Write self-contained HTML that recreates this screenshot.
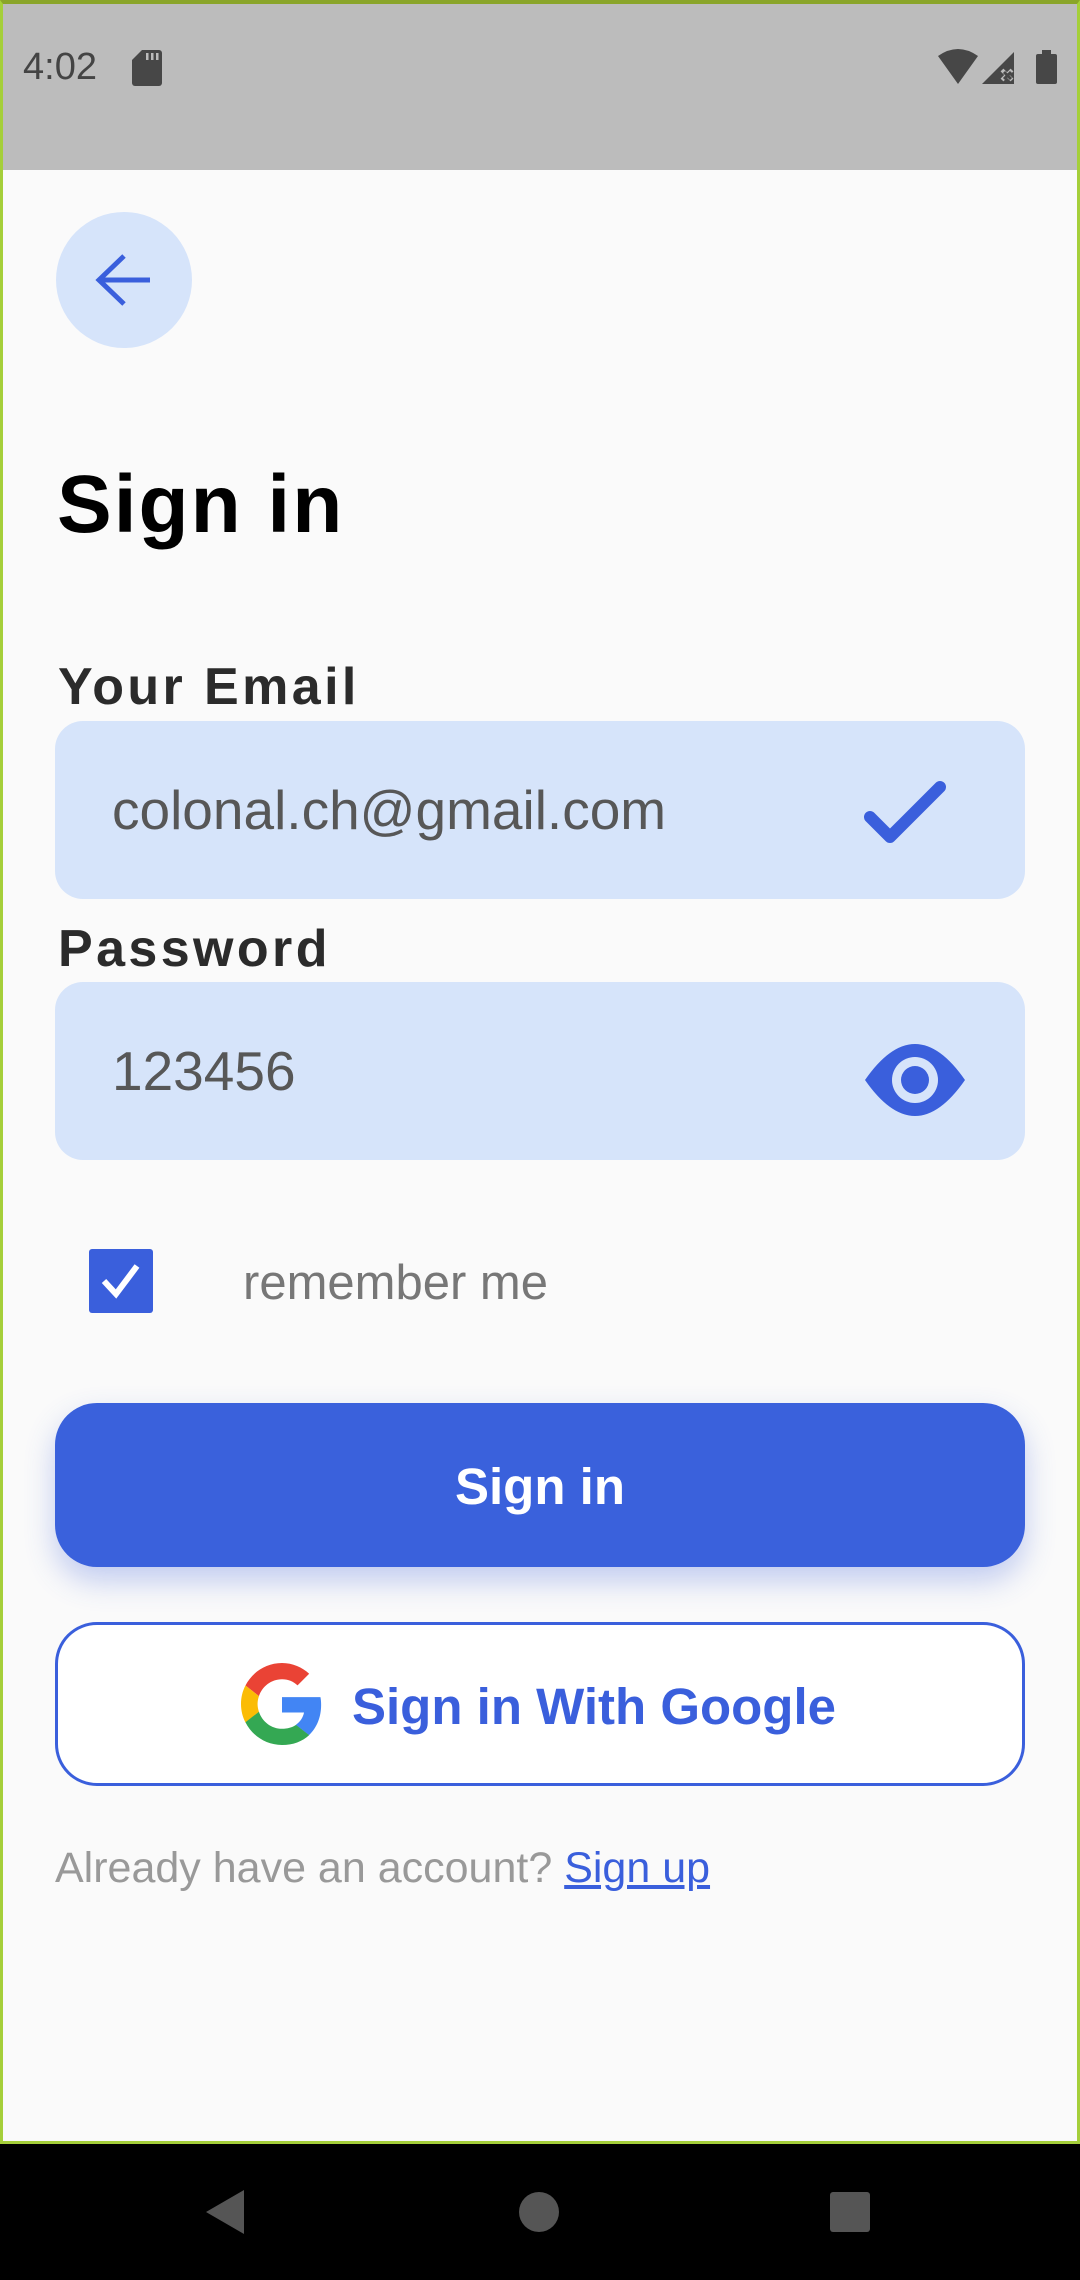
<!DOCTYPE html>
<html><head><meta charset="utf-8"><style>
*{margin:0;padding:0;box-sizing:border-box}
body{width:1080px;height:2280px;position:relative;background:#fafafa;font-family:"Liberation Sans",Roboto,sans-serif;overflow:hidden}
.abs{position:absolute}
#frame{left:0;top:0;width:1080px;height:2144px;border:3px solid #a5cf3a;border-top:4px solid #8aa52a;pointer-events:none}
.field{left:55px;width:970px;height:178px;background:#d6e4fa;border-radius:28px}
.ftxt{left:57px;font-size:55px;color:#575757;line-height:178px}
.lbl{left:58px;font-size:52px;font-weight:bold;color:#2b2b2b;letter-spacing:3.4px}
</style></head><body>
<div class="abs" style="left:0;top:0;width:1080px;height:170px;background:#bcbcbc"></div>
<div class="abs" style="left:23px;top:46px;font-size:38px;color:#444">4:02</div>
<svg class="abs" style="left:132px;top:50px" width="30" height="36" viewBox="0 0 30 36"><path d="M10 0H27a3 3 0 0 1 3 3V33a3 3 0 0 1-3 3H3a3 3 0 0 1-3-3V10Z" fill="#474747"/><rect x="14" y="3" width="2.5" height="7" fill="#bcbcbc"/><rect x="19" y="3" width="2.5" height="7" fill="#bcbcbc"/><rect x="24" y="3" width="2.5" height="7" fill="#bcbcbc"/></svg>
<svg class="abs" style="left:938px;top:48px" width="130" height="40" viewBox="0 0 130 40"><path d="M0 8Q20 -6 40 8L20 36Z" fill="#474747"/><path d="M44 36L76 4V36Z" fill="#474747"/><path d="M64 22l10 10m0-10l-10 10" stroke="#bcbcbc" stroke-width="4"/><path d="M66 24l7 7m0-7l-7 7" stroke="#474747" stroke-width="3"/><rect x="98" y="6" width="21" height="30" rx="2" fill="#474747"/><rect x="104" y="2" width="9" height="5" fill="#474747"/></svg>
<div class="abs" style="left:56px;top:212px;width:136px;height:136px;border-radius:50%;background:#d6e4fa"></div>
<svg class="abs" style="left:94px;top:250px" width="60" height="60" viewBox="0 0 60 60"><path d="M56 30H6M30 6L5 30L30 54" fill="none" stroke="#3a5fdc" stroke-width="5"/></svg>
<div class="abs" style="left:57px;top:458px;font-size:82px;font-weight:bold;color:#000;letter-spacing:2px">Sign in</div>
<div class="abs lbl" style="top:657px">Your Email</div>
<div class="abs field" style="top:721px"><div class="abs ftxt">colonal.ch@gmail.com</div></div>
<svg class="abs" style="left:860px;top:777px" width="90" height="70"><path d="M10 40L30 60L80 10" fill="none" stroke="#3a5fdc" stroke-width="12" stroke-linecap="round" stroke-linejoin="round"/></svg>
<div class="abs lbl" style="top:919px">Password</div>
<div class="abs field" style="top:982px"><div class="abs ftxt">123456</div></div>
<svg class="abs" style="left:864px;top:1044px" width="102" height="72" viewBox="0 0 102 72"><path d="M1 36Q51 -36 101 36Q51 108 1 36Z" fill="#3a5fdc"/><circle cx="51" cy="36" r="23" fill="#d6e4fa"/><circle cx="51" cy="36" r="14" fill="#3a5fdc"/></svg>
<div class="abs" style="left:89px;top:1249px;width:64px;height:64px;background:#3a5fdc;border-radius:3px"></div>
<svg class="abs" style="left:89px;top:1249px" width="64" height="64"><path d="M15 32L27 45L48 17" fill="none" stroke="#fff" stroke-width="6"/></svg>
<div class="abs" style="left:243px;top:1255px;font-size:49px;color:#777">remember me</div>
<div class="abs" style="left:55px;top:1403px;width:970px;height:164px;border-radius:42px;background:#3a61dc;box-shadow:0 14px 30px rgba(58,97,220,0.3);color:#fff;font-weight:bold;font-size:51px;text-align:center;line-height:168px">Sign in</div>
<div class="abs" style="left:55px;top:1622px;width:970px;height:164px;border-radius:42px;background:#fff;border:3px solid #3a5fdc"></div>
<svg class="abs" style="left:241px;top:1663px" width="82" height="82" viewBox="0 0 48 48"><path fill="#EA4335" d="M24 9.5c3.5 0 6.6 1.2 9.1 3.6l6.8-6.8C35.8 2.5 30.3 0 24 0 14.6 0 6.6 5.4 2.6 13.2l7.9 6.2C12.4 13.7 17.7 9.5 24 9.5z"/><path fill="#4285F4" d="M46.9 24.5c0-1.6-.1-3.1-.4-4.5H24v9h12.9c-.6 3-2.3 5.5-4.8 7.2l7.7 6c4.5-4.2 7.1-10.4 7.1-17.7z"/><path fill="#FBBC05" d="M10.5 28.6c-.5-1.5-.8-3-.8-4.6s.3-3.1.8-4.6l-7.9-6.2C.9 16.5 0 20.1 0 24s.9 7.5 2.6 10.8l7.9-6.2z"/><path fill="#34A853" d="M24 48c6.5 0 11.9-2.1 15.9-5.8l-7.7-6c-2.2 1.5-5 2.3-8.2 2.3-6.3 0-11.6-4.2-13.5-10l-7.9 6.2C6.6 42.6 14.6 48 24 48z"/></svg>
<div class="abs" style="left:352px;top:1677px;font-size:51px;font-weight:bold;color:#3a5fdc;line-height:60px">Sign in With Google</div>
<div class="abs" style="left:55px;top:1844px;font-size:43px;color:#999">Already have an account? <span style="color:#3a5fdc;text-decoration:underline">Sign up</span></div>
<div class="abs" style="left:0;top:2144px;width:1080px;height:136px;background:#000"></div>
<svg class="abs" style="left:200px;top:2188px" width="48" height="48"><path d="M44 2V46L6 24Z" fill="#555"/></svg>
<div class="abs" style="left:519px;top:2192px;width:40px;height:40px;border-radius:50%;background:#555"></div>
<div class="abs" style="left:830px;top:2192px;width:40px;height:40px;border-radius:3px;background:#555"></div>
<div class="abs" id="frame"></div>
</body></html>
